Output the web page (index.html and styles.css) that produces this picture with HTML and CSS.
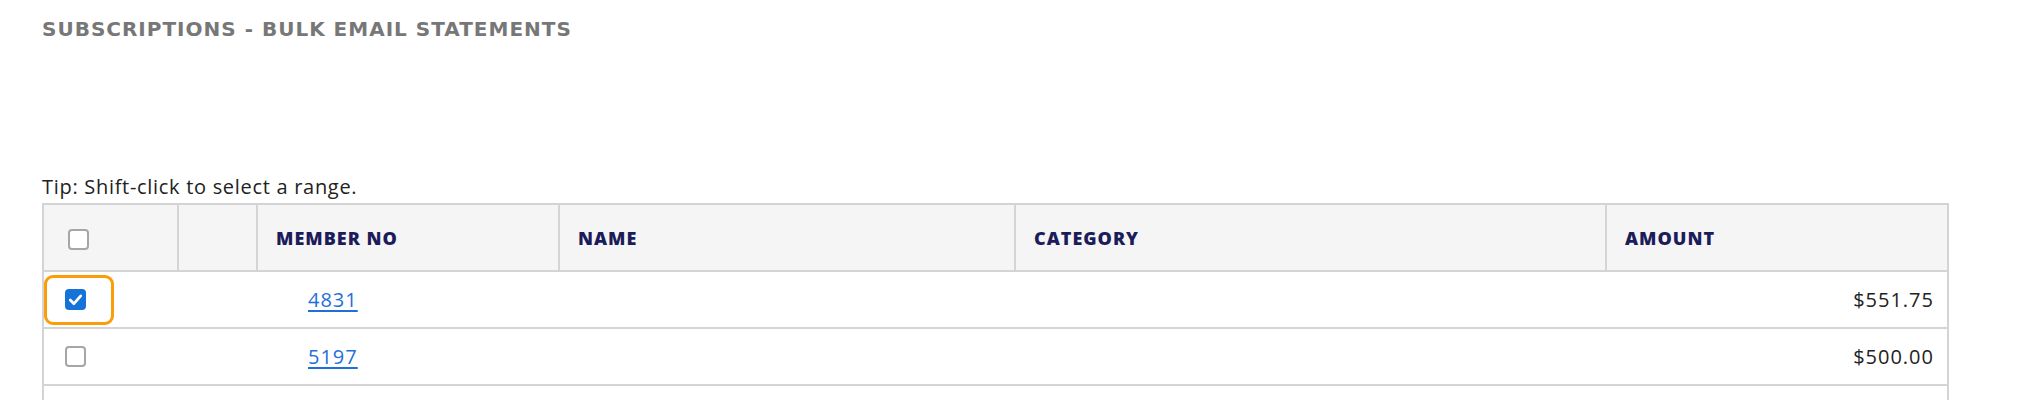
FILE: index.html
```html
<!DOCTYPE html>
<html lang="en">
<head>
<meta charset="utf-8">
<title>Subscriptions - Bulk Email Statements</title>
<link rel="stylesheet" href="styles.css">
</head>
<body>
<div class="page">
  <h1 class="page-title">SUBSCRIPTIONS - BULK EMAIL STATEMENTS</h1>
  <p class="tip">Tip: Shift-click to select a range.</p>
  <table class="grid">
    <colgroup>
      <col class="c-check">
      <col class="c-blank">
      <col class="c-member">
      <col class="c-name">
      <col class="c-category">
      <col class="c-amount">
    </colgroup>
    <thead>
      <tr>
        <th class="th-check"><span class="cb"></span></th>
        <th></th>
        <th>MEMBER NO</th>
        <th>NAME</th>
        <th>CATEGORY</th>
        <th>AMOUNT</th>
      </tr>
    </thead>
    <tbody>
      <tr>
        <td class="td-check"><span class="ring focused"><span class="cb checked"><svg viewBox="0 0 20 20" width="20" height="20"><path d="M5 10.5 L8.5 14 L15 6.5" fill="none" stroke="#fff" stroke-width="2.6" stroke-linecap="round" stroke-linejoin="round"/></svg></span></span></td>
        <td></td>
        <td class="td-member"><a href="#">4831</a></td>
        <td></td>
        <td></td>
        <td class="td-amount">$551.75</td>
      </tr>
      <tr>
        <td class="td-check"><span class="ring"><span class="cb"></span></span></td>
        <td></td>
        <td class="td-member"><a href="#">5197</a></td>
        <td></td>
        <td></td>
        <td class="td-amount">$500.00</td>
      </tr>
      <tr class="row-empty">
        <td class="td-check"></td>
        <td></td>
        <td></td>
        <td></td>
        <td></td>
        <td></td>
      </tr>
    </tbody>
  </table>
</div>
</body>
</html>
```

FILE: styles.css
```css
html, body {
  margin: 0;
  padding: 0;
  background: #ffffff;
}

body {
  font-family: "Open Sans", "Liberation Sans", sans-serif;
  color: #222222;
}

.page {
  padding: 0 0 0 42px;
}

.page-title {
  margin: 0;
  padding-top: 14px;
  font-family: "DejaVu Sans", "Liberation Sans", sans-serif;
  font-weight: bold;
  font-size: 20px;
  letter-spacing: 1px;
  line-height: 30px;
  color: #777777;
}

.tip {
  margin: 129px 0 3px 0;
  font-size: 20px;
  letter-spacing: 0.7px;
  line-height: 27px;
  color: #222222;
}

.grid {
  border-collapse: collapse;
  table-layout: fixed;
  width: 1905px;
  margin-top: 0;
}

.c-check { width: 135px; }
.c-blank { width: 79px; }
.c-member { width: 302px; }
.c-name { width: 456px; }
.c-category { width: 591px; }
.c-amount { width: 342px; }

.grid th {
  background: #f5f5f5;
  border: 2px solid #d4d4d4;
  height: 65px;
  padding: 0 0 0 18px;
  text-align: left;
  vertical-align: middle;
  font-size: 18px;
  font-weight: 800;
  letter-spacing: 1px;
  color: #1c1c5a;
}

.grid th.th-check {
  padding-left: 24px;
}

.grid td {
  border-top: 2px solid #d4d4d4;
  border-bottom: 2px solid #d4d4d4;
  height: 55px;
  padding: 0;
  vertical-align: middle;
  font-size: 20px;
  letter-spacing: 1px;
}

.grid td:first-child {
  border-left: 2px solid #d4d4d4;
}

.grid td:last-child {
  border-right: 2px solid #d4d4d4;
}

.td-member {
  padding-left: 51px !important;
}

.td-member a {
  color: #1f6fd8;
  text-decoration: underline;
  text-underline-offset: 3px;
}

.td-amount {
  text-align: right;
  padding-right: 13px !important;
  letter-spacing: 1.2px;
  color: #222222;
}

.ring {
  display: flex;
  align-items: center;
  box-sizing: border-box;
  width: 70px;
  height: 50px;
  padding-left: 18px;
  border: 3px solid transparent;
  border-radius: 9px;
}

.ring.focused {
  border-color: #fb9d08;
}

.cb {
  display: inline-block;
  box-sizing: border-box;
  width: 21px;
  height: 21px;
  border: 2px solid #a6a6a6;
  border-radius: 4px;
  background: #ffffff;
  vertical-align: middle;
}

.cb.checked {
  border: none;
  background: #1572d6;
  border-radius: 4px;
}

.cb.checked svg {
  display: block;
  width: 21px;
  height: 21px;
}

.row-empty td {
  height: 55px;
}
```
